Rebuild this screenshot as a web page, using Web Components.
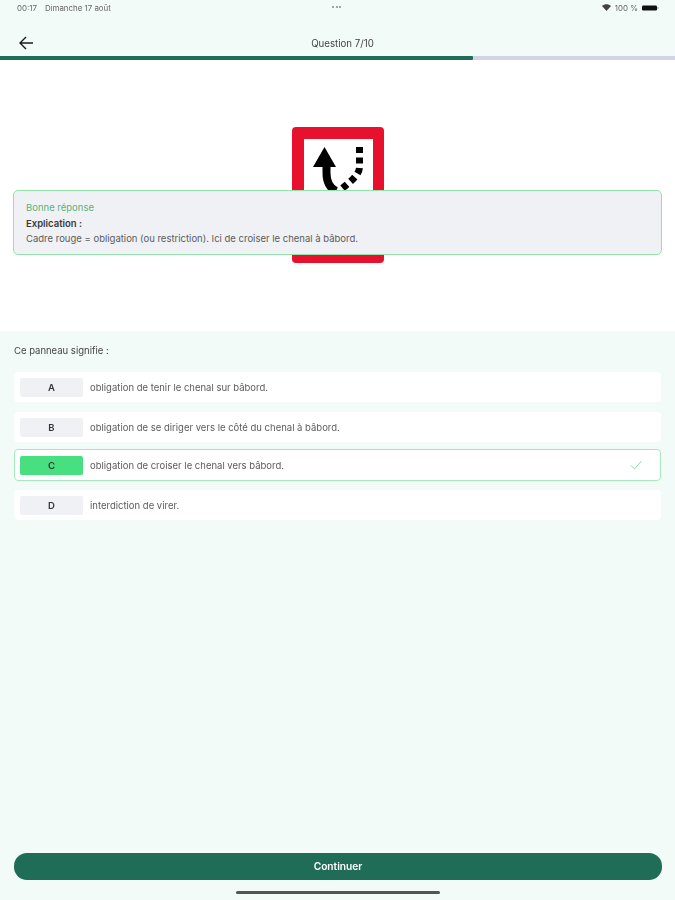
<!DOCTYPE html>
<html lang="fr">
<head>
<meta charset="utf-8">
<title>Question 7/10</title>
<style>
html,body{margin:0;padding:0;height:100%}
body{width:675px;height:900px;overflow:hidden;background:#f3fbf9;font-family:Inter,"Noto Sans",sans-serif;color:#333}
</style>
</head>
<body>
<quiz-app></quiz-app>
<script>
function el(name, css, html){
  customElements.define(name, class extends HTMLElement{
    constructor(){super();this.attachShadow({mode:'open'}).innerHTML='<style>'+css+'</style>'+(typeof html==='function'?html(this):html);}
  });
}
el('status-bar',`
:host{display:flex;align-items:center;justify-content:space-between;height:15px;padding:0 16px 0 17px;font-size:7.9px;color:#666;position:relative}
.l{display:flex;gap:8px}.r{display:flex;align-items:center;gap:4px}
.dots{position:absolute;left:332px;top:6px;display:flex;gap:1.5px}
.dots i{width:2px;height:2px;border-radius:50%;background:#888}
`,`<div class="l"><span>00:17</span><span>Dimanche 17 août</span></div>
<div class="dots"><i></i><i></i><i></i></div>
<div class="r"><svg width="9" height="7" viewBox="0 0 9 7"><path d="M0 2 C2.5 -.3 6.5 -.3 9 2 L4.5 7Z" fill="#444"/></svg><span>100 %</span>
<svg width="17" height="6" viewBox="0 0 17 6"><rect x="0" y="0.500" width="15" height="5" rx="1.200" fill="#111"/><rect x="15.300" y="2" width="1.200" height="2" fill="#aaa"/></svg></div>`);

el('nav-bar',`
:host{display:flex;align-items:center;justify-content:center;height:41px;position:relative;font-size:9.7px;color:#444}
svg{position:absolute;left:19px;top:21px}
span{margin:15px 0 0 10px}
`,`<svg width="14" height="14" viewBox="0 0 14 14" fill="none" stroke="#1c1c1c" stroke-width="1.400"><path d="M14 7H1.200M7 1 1 7l6 6"/></svg><span><slot></slot></span>`);

el('progress-bar',`
:host{display:flex;height:4px;background:#d2d3e6}
div{width:473px;background:#1f6d57;border-radius:0 1px 1px 0}
`,`<div></div>`);

el('sign-panel',`
:host{display:flex;align-items:center;justify-content:center;height:271px;background:#fff;position:relative}
svg{display:block;margin-top:-2px}
.over{position:absolute;left:13px;right:13px;top:130px}
`,`<svg width="92" height="136" viewBox="0 0 92 136">
<rect width="92" height="136" rx="4" fill="#e8112d"/>
<rect x="12" y="12" width="69" height="112" fill="#fff"/>
<path d="M34.500 38V46C34.500 55 38 61 44 64" fill="none" stroke="#000" stroke-width="8"/>
<path d="M32.500 20 21 40H44Z" fill="#000"/>
<path d="M67.500 20V40C67.500 48 58 55 47 64" fill="none" stroke="#000" stroke-width="7" stroke-dasharray="6 4.500"/>
</svg><div class="over"><slot></slot></div>`);

el('feedback-card',`
:host{display:block;box-sizing:border-box;height:65px;padding:11px 12px;background:#eff1f5;border:1.2px solid #93e2ab;border-radius:5px;font-size:9.5px;color:#5c5c5c}
.t{color:#5cb37c;line-height:12px}
.h{font-weight:600;color:#3a3a3a;line-height:12px;margin-top:4px}
.b{line-height:14px;margin-top:2px}
`,`<div class="t">Bonne réponse</div><div class="h">Explication :</div><div class="b"><slot></slot></div>`);

el('quiz-option',`
:host{display:flex;align-items:center;box-sizing:border-box;height:30px;padding:0 5px;background:#fff;border:1px solid transparent;border-radius:4px;font-size:9.5px;color:#5c5c5c;position:relative}
:host(:first-child){margin-bottom:1px}
:host([correct]){height:32px;margin-top:-2px;border-color:#a6e9bc}
.k{flex:none;width:63px;height:19px;border-radius:2px;background:#f0f1f5;display:flex;align-items:center;justify-content:center;font-weight:600;color:#333;font-size:9.5px;margin-right:7px}
:host([correct]) .k{background:#47df7f}
svg{position:absolute;right:18px;top:10px;display:none}
:host([correct]) svg{display:block}
`,(h)=>`<div class="k">${h.getAttribute('key-label')}</div><span><slot></slot></span><svg width="12" height="10" viewBox="0 0 12 10" fill="none" stroke="#86dca6" stroke-width="1"><path d="M1 5.500 4.500 9 11.500 1"/></svg>`);

el('continue-button',`
:host{display:flex;align-items:center;justify-content:center;box-sizing:border-box;height:27px;padding-bottom:1px;border-radius:13px;background:#1f6d57;color:#fff;font-weight:600;font-size:10.200px}
`,`<slot></slot>`);

el('quiz-app',`
:host{display:flex;flex-direction:column;width:675px;height:900px;position:relative;filter:blur(.45px)}
.q{font-size:9.5px;color:#444;padding:14px 14px 0;line-height:11px}
.list{display:flex;flex-direction:column;gap:9px;padding:16px 14px 0 14px;flex:1}
.foot{padding:0 13px 20px 14px}
.home{position:absolute;left:236px;top:891px;width:204px;height:3px;border-radius:2px;background:#555}
`,`<status-bar></status-bar>
<nav-bar>Question 7/10</nav-bar>
<progress-bar></progress-bar>
<sign-panel><feedback-card>Cadre rouge = obligation (ou restriction). Ici de croiser le chenal à bâbord.</feedback-card></sign-panel>
<div class="q">Ce panneau signifie :</div>
<div class="list">
<quiz-option key-label="A">obligation de tenir le chenal sur bâbord.</quiz-option>
<quiz-option key-label="B">obligation de se diriger vers le côté du chenal à bâbord.</quiz-option>
<quiz-option key-label="C" correct>obligation de croiser le chenal vers bâbord.</quiz-option>
<quiz-option key-label="D">interdiction de virer.</quiz-option>
</div>
<div class="foot"><continue-button>Continuer</continue-button></div>
<div class="home"></div>`);
</script>
</body>
</html>
